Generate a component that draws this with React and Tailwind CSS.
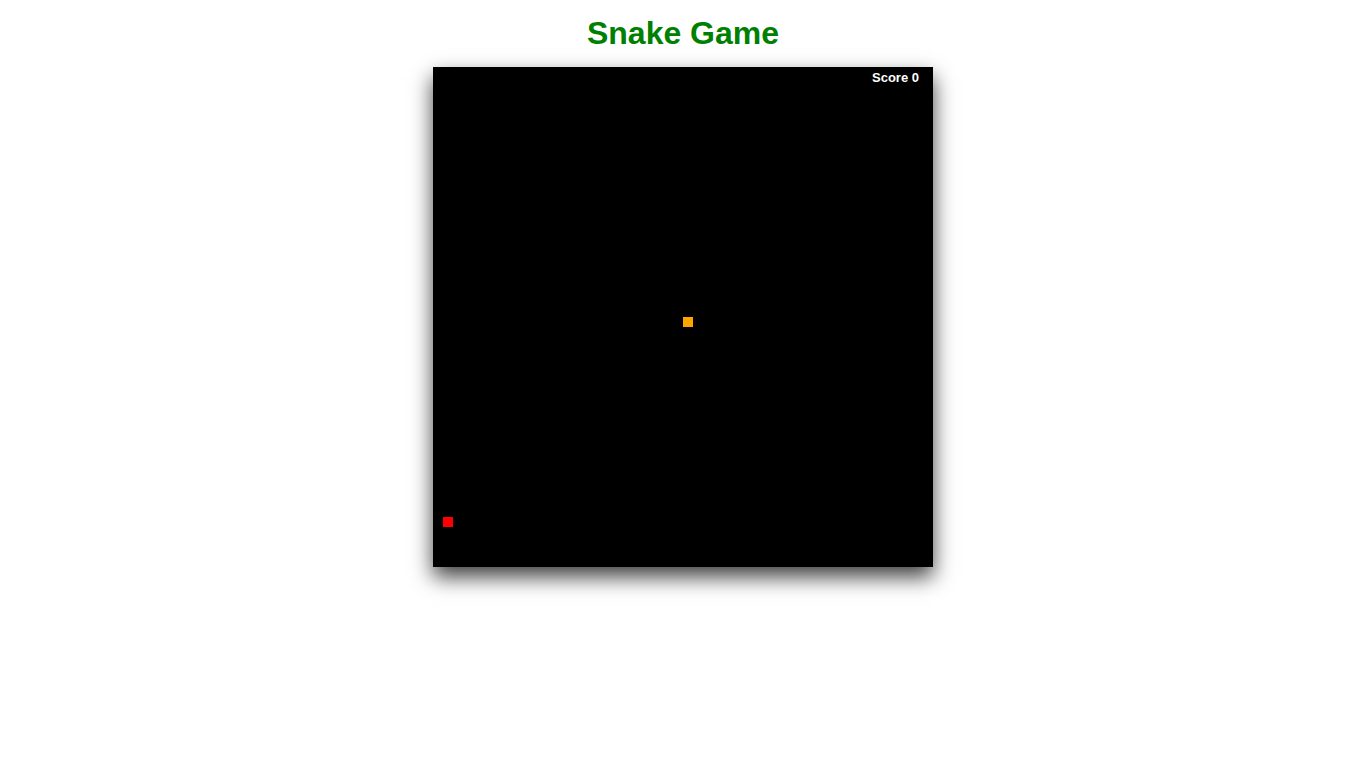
export default function App() {
  return (
    <div className="min-h-[768px] w-full bg-white flex flex-col items-center" style={{ fontFamily: '"Liberation Sans", Arial, sans-serif' }}>
      <h1 className="mt-[15px] text-[32px] leading-[36px] font-bold text-[#008000]">Snake Game</h1>
      <div className="relative mt-[16px] w-[500px] h-[500px] bg-black shadow-[0_10px_20px_rgba(0,0,0,0.75)]">
        <div className="absolute right-[14px] top-[1px] text-[13px] leading-[20px] font-bold text-white">Score 0</div>
        <div className="absolute left-[250px] top-[250px] w-[10px] h-[10px] bg-[#ffa500]" />
        <div className="absolute left-[10px] top-[450px] w-[10px] h-[10px] bg-[#ff0000]" />
      </div>
    </div>
  );
}
